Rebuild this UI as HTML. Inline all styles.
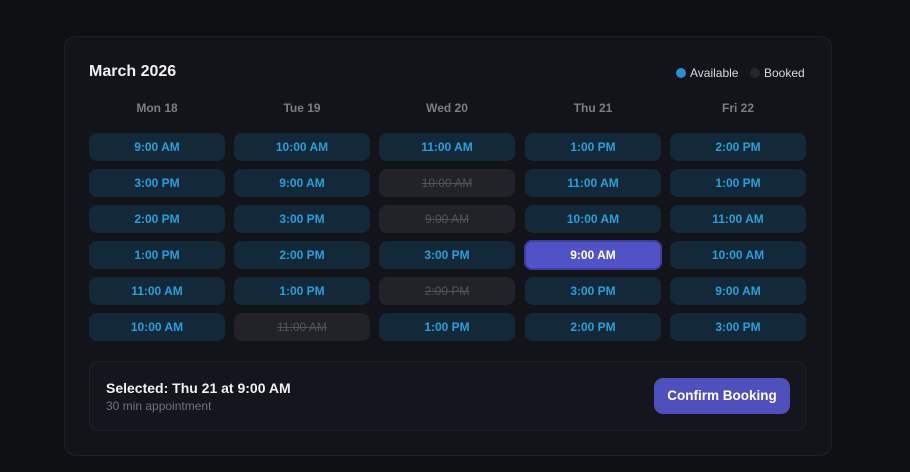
<!DOCTYPE html>
<html><head><meta charset="utf-8"><style>
*{box-sizing:border-box;margin:0;padding:0}
body{width:910px;height:472px;background:#0e0f13;font-family:"Liberation Sans",sans-serif;position:relative;overflow:hidden}
.card{position:absolute;left:64px;top:36px;width:768px;height:420px;background:#121419;border:1px solid #1f2128;border-radius:12px}
.t{position:absolute;left:89px;top:63px;color:#f0f0f2;font-weight:bold;font-size:16px}
.leg{position:absolute;top:66px;font-size:12px;color:#d8d8dc;display:flex;align-items:center}
.dot{width:10px;height:10px;border-radius:50%;margin-right:4px}
.h{position:absolute;top:101px;width:136px;text-align:center;color:#7b7e87;font-weight:bold;font-size:12px}
.s{position:absolute;width:136px;height:28px;border-radius:8px;background:#13293a;color:#2a9fd8;font-size:12px;font-weight:bold;text-align:center;line-height:28px}
.b{background:#222328;color:#50535a;text-decoration:line-through;font-weight:normal}
.sel{background:#5252c8;color:#fff;border:2px solid #3e3ea0;line-height:24px}
.f{position:absolute;left:89px;top:361px;width:717px;height:70px;background:#15161d;border:1px solid #1f2128;border-radius:10px}
.btn{position:absolute;left:654px;top:378px;width:136px;height:36px;background:#4f4fbd;border-radius:9px;color:#fff;font-weight:bold;font-size:13.5px;text-align:center;line-height:36px}
</style></head><body>
<div class="card"></div>
<div class="t">March 2026</div>
<div class="leg" style="left:676px"><span class="dot" style="background:#2a8fcc"></span>Available</div>
<div class="leg" style="left:750px"><span class="dot" style="background:#25272d"></span>Booked</div>
<div class="h" style="left:89px">Mon 18</div>
<div class="h" style="left:234px">Tue 19</div>
<div class="h" style="left:379px">Wed 20</div>
<div class="h" style="left:525px">Thu 21</div>
<div class="h" style="left:670px">Fri 22</div>

<div class="s" style="left:89px;top:133px">9:00 AM</div>
<div class="s" style="left:89px;top:169px">3:00 PM</div>
<div class="s" style="left:89px;top:205px">2:00 PM</div>
<div class="s" style="left:89px;top:241px">1:00 PM</div>
<div class="s" style="left:89px;top:277px">11:00 AM</div>
<div class="s" style="left:89px;top:313px">10:00 AM</div>

<div class="s" style="left:234px;top:133px">10:00 AM</div>
<div class="s" style="left:234px;top:169px">9:00 AM</div>
<div class="s" style="left:234px;top:205px">3:00 PM</div>
<div class="s" style="left:234px;top:241px">2:00 PM</div>
<div class="s" style="left:234px;top:277px">1:00 PM</div>
<div class="s b" style="left:234px;top:313px">11:00 AM</div>

<div class="s" style="left:379px;top:133px">11:00 AM</div>
<div class="s b" style="left:379px;top:169px">10:00 AM</div>
<div class="s b" style="left:379px;top:205px">9:00 AM</div>
<div class="s" style="left:379px;top:241px">3:00 PM</div>
<div class="s b" style="left:379px;top:277px">2:00 PM</div>
<div class="s" style="left:379px;top:313px">1:00 PM</div>

<div class="s" style="left:525px;top:133px">1:00 PM</div>
<div class="s" style="left:525px;top:169px">11:00 AM</div>
<div class="s" style="left:525px;top:205px">10:00 AM</div>
<div class="s sel" style="left:524px;top:240px;width:138px;height:30px;line-height:26px">9:00 AM</div>
<div class="s" style="left:525px;top:277px">3:00 PM</div>
<div class="s" style="left:525px;top:313px">2:00 PM</div>

<div class="s" style="left:670px;top:133px">2:00 PM</div>
<div class="s" style="left:670px;top:169px">1:00 PM</div>
<div class="s" style="left:670px;top:205px">11:00 AM</div>
<div class="s" style="left:670px;top:241px">10:00 AM</div>
<div class="s" style="left:670px;top:277px">9:00 AM</div>
<div class="s" style="left:670px;top:313px">3:00 PM</div>

<div class="f"></div>
<div style="position:absolute;left:106px;top:380px;color:#f0f0f2;font-weight:bold;font-size:14px">Selected: Thu 21 at 9:00 AM</div>
<div style="position:absolute;left:106px;top:399px;color:#6f727b;font-size:12px">30 min appointment</div>
<div class="btn">Confirm Booking</div>
</body></html>
